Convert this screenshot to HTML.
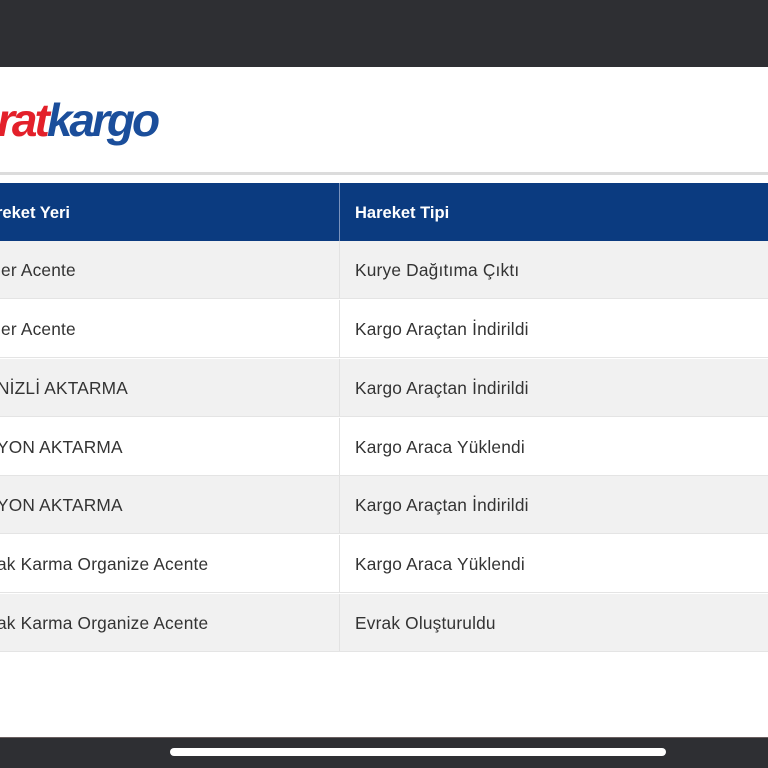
<!DOCTYPE html>
<html><head><meta charset="utf-8"><style>
*{margin:0;padding:0;box-sizing:border-box}
body{width:768px;height:768px;overflow:hidden;background:#fff;font-family:"Liberation Sans",sans-serif;position:relative}
.top{position:absolute;left:0;top:0;width:768px;height:67px;background:#2e2f33}
.bot{position:absolute;left:0;top:737px;width:768px;height:31px;background:#2e2f33;border-top:1px solid #6a5f5f}
.ind{position:absolute;left:170px;top:748px;width:496px;height:8px;border-radius:4px;background:#fff}
.logo{position:absolute;left:-3px;top:95px;font-size:46px;font-weight:bold;font-style:italic;letter-spacing:-3px;line-height:50px}
.sep{position:absolute;left:0;top:172px;width:768px;height:3px;background:#dcdcdc}
.th{position:absolute;left:0;top:183px;width:768px;height:58px;background:#0b3b80;color:#fff;font-weight:bold;font-size:16.5px}
.row{position:absolute;left:0;width:768px;height:58px;font-size:17.3px;letter-spacing:0.2px;color:#333;border-bottom:1px solid #e4e4e4}
.c1,.c2{position:absolute;top:1px;height:100%;display:flex;align-items:center}
.th .c1,.th .c2{top:1px}
.c1{left:-3px}
.c2{left:355px}
.div{position:absolute;left:339px;top:0;width:1px;height:100%;background:#e2e2e2}
.th .div{background:#7b93bd}
</style></head><body>
<div class="top"></div>
<div class="logo"><span style="color:#e3202a">rat</span><span style="color:#1b4e9b">kargo</span></div>
<div class="sep"></div>
<div class="th"><div class="c1" style="left:-4px">reket Yeri</div><div class="div"></div><div class="c2">Hareket Tipi</div></div>
<div class="row" style="top:241px;background:#f1f1f1"><div class="c1">ler Acente</div><div class="div"></div><div class="c2">Kurye Dağıtıma Çıktı</div></div>
<div class="row" style="top:300px;background:#fff"><div class="c1">ler Acente</div><div class="div"></div><div class="c2">Kargo Araçtan İndirildi</div></div>
<div class="row" style="top:359px;background:#f1f1f1"><div class="c1">NİZLİ AKTARMA</div><div class="div"></div><div class="c2">Kargo Araçtan İndirildi</div></div>
<div class="row" style="top:418px;background:#fff"><div class="c1">YON AKTARMA</div><div class="div"></div><div class="c2">Kargo Araca Yüklendi</div></div>
<div class="row" style="top:476px;background:#f1f1f1"><div class="c1">YON AKTARMA</div><div class="div"></div><div class="c2">Kargo Araçtan İndirildi</div></div>
<div class="row" style="top:535px;background:#fff"><div class="c1">ak Karma Organize Acente</div><div class="div"></div><div class="c2">Kargo Araca Yüklendi</div></div>
<div class="row" style="top:594px;background:#f1f1f1"><div class="c1">ak Karma Organize Acente</div><div class="div"></div><div class="c2">Evrak Oluşturuldu</div></div>
<div class="bot"></div>
<div class="ind"></div>
</body></html>
